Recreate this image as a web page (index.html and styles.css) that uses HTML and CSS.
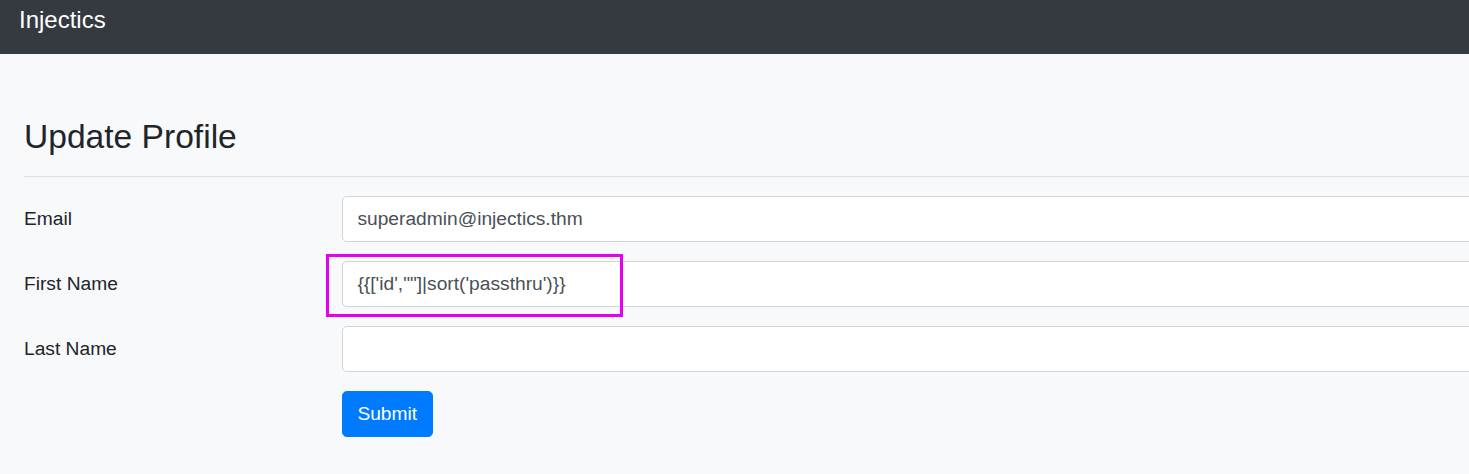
FILE: index.html
```html
<!DOCTYPE html>
<html lang="en">
<head>
<meta charset="utf-8">
<title>Injectics - Update Profile</title>
<link rel="stylesheet" href="styles.css">
</head>
<body>
<nav class="navbar">
  <a class="brand" href="#">Injectics</a>
</nav>
<main class="container">
  <h3 class="title">Update Profile</h3>
  <hr class="divider">
  <form class="form">
    <div class="row">
      <label class="label" for="email">Email</label>
      <input class="input" id="email" type="text" value="superadmin@injectics.thm">
    </div>
    <div class="row">
      <label class="label" for="fname">First Name</label>
      <div class="field">
        <input class="input" id="fname" type="text" value="{{['id',&quot;&quot;]|sort('passthru')}}">
        <span class="highlight"></span>
      </div>
    </div>
    <div class="row">
      <label class="label" for="lname">Last Name</label>
      <input class="input" id="lname" type="text" value="">
    </div>
    <div class="row">
      <span class="label"></span>
      <button class="btn" type="button">Submit</button>
    </div>
  </form>
</main>
</body>
</html>
```

FILE: styles.css
```css
html, body {
  margin: 0;
  padding: 0;
}
body {
  background: #f8f9fa;
  font-family: "Liberation Sans", Arial, sans-serif;
  color: #212529;
  overflow: hidden;
  height: 474px;
}
.navbar {
  height: 54px;
  background: #343a40;
  padding: 2px 19px 0;
  box-sizing: border-box;
}
.brand {
  display: inline-block;
  font-size: 24px;
  line-height: 36px;
  color: #fff;
  text-decoration: none;
}
.container {
  padding: 63px 0 0 24px;
  margin-right: -60px;
}
.title {
  margin: 0;
  font-size: 33.6px;
  line-height: 1.2;
  font-weight: 400;
  color: #212529;
}
.divider {
  margin: 19px 0 0;
  border: 0;
  border-top: 1px solid #dfe0e1;
  height: 0;
}
.form {
  padding-top: 19px;
}
.row {
  display: flex;
  align-items: center;
  margin-bottom: 19.4px;
}
.label {
  flex: 0 0 318px;
  font-size: 19.2px;
  line-height: 28.8px;
  padding-top: 1px;
  color: #212529;
}
.field {
  position: relative;
  flex: 1;
  display: flex;
}
.input {
  flex: 1;
  height: 45.6px;
  box-sizing: border-box;
  padding: 7.2px 14.4px;
  font-family: "Liberation Sans", Arial, sans-serif;
  font-size: 19.2px;
  line-height: 28.8px;
  color: #495057;
  background: #fff;
  border: 1px solid #ced4da;
  border-radius: 4.8px;
  outline: none;
}
.highlight {
  position: absolute;
  left: -16px;
  top: -7px;
  width: 297px;
  height: 63px;
  box-sizing: border-box;
  border: 3px solid #e600f2;
  pointer-events: none;
}
.btn {
  height: 45.6px;
  padding: 7.2px 14.4px;
  font-family: "Liberation Sans", Arial, sans-serif;
  font-size: 19.2px;
  line-height: 28.8px;
  color: #fff;
  background: #007bff;
  border: 1px solid #007bff;
  border-radius: 4.8px;
  cursor: pointer;
}
```
